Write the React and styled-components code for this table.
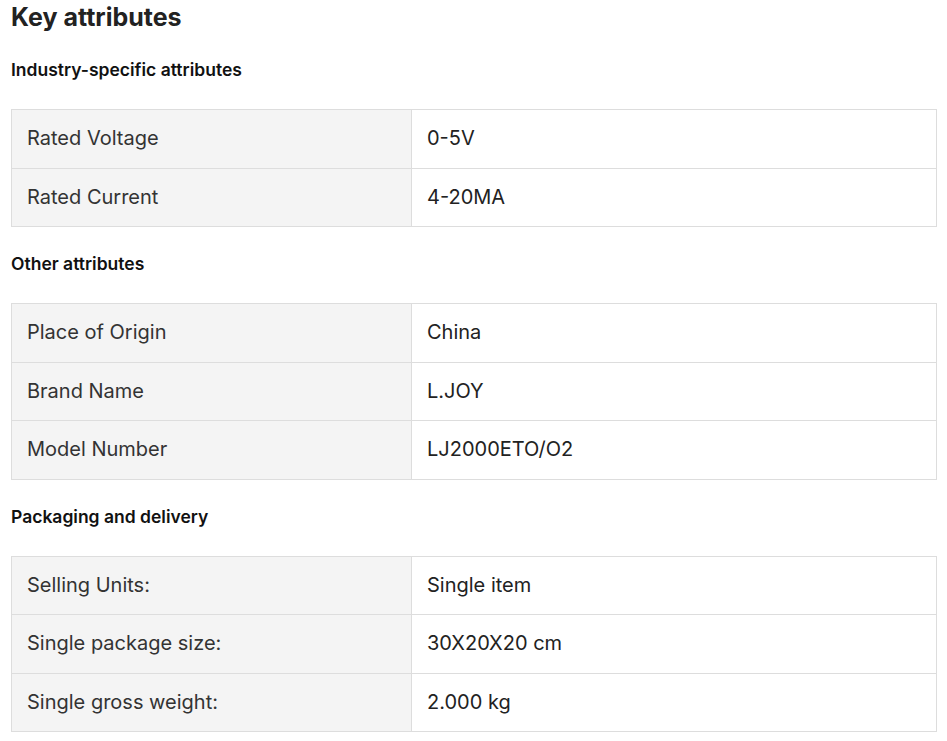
import React from "react";
import styled, { createGlobalStyle } from "styled-components";

const GlobalStyle = createGlobalStyle`
  body {
    margin: 0;
    background: #fff;
    font-family: Inter, "Noto Sans", "Liberation Sans", sans-serif;
    color: #222;
  }
`;

const sections = [
  {
    title: "Industry-specific attributes",
    rows: [
      ["Rated Voltage", "0-5V"],
      ["Rated Current", "4-20MA"],
    ],
  },
  {
    title: "Other attributes",
    rows: [
      ["Place of Origin", "China"],
      ["Brand Name", "L.JOY"],
      ["Model Number", "LJ2000ETO/O2"],
    ],
  },
  {
    title: "Packaging and delivery",
    rows: [
      ["Selling Units:", "Single item"],
      ["Single package size:", "30X20X20 cm"],
      ["Single gross weight:", "2.000 kg"],
    ],
  },
];

export default function App() {
  return (
    <>
      <GlobalStyle />
      <Page>
        <Title>Key attributes</Title>
        {sections.map((section) => (
          <React.Fragment key={section.title}>
            <SectionTitle>{section.title}</SectionTitle>
            <Table>
              <tbody>
                {section.rows.map(([label, value]) => (
                  <tr key={label}>
                    <Cell $label>{label}</Cell>
                    <Cell>{value}</Cell>
                  </tr>
                ))}
              </tbody>
            </Table>
          </React.Fragment>
        ))}
      </Page>
    </>
  );
}

const Page = styled.div`
  display: flex;
  flex-direction: column;
  padding: 3px 10px 8px 11px;
`;

const Title = styled.h2`
  margin: 0 0 27px;
  font-size: 25px;
  line-height: 28px;
  font-weight: 700;
  color: #222;
`;

const SectionTitle = styled.h3`
  margin: 0 0 27px;
  font-size: 17.5px;
  line-height: 24px;
  font-weight: 600;
  color: #111;
`;

const Table = styled.table`
  width: 100%;
  margin-bottom: 25px;
  border-collapse: collapse;
  table-layout: fixed;
  font-size: 20px;
`;

const Cell = styled.td`
  box-sizing: border-box;
  border: 1px solid #ddd;
  padding: 16px 15px;
  line-height: 25.5px;
  width: ${(p) => (p.$label ? "400px" : "auto")};
  background: ${(p) => (p.$label ? "#f4f4f4" : "#fff")};
  color: ${(p) => (p.$label ? "#333" : "#222")};
`;
